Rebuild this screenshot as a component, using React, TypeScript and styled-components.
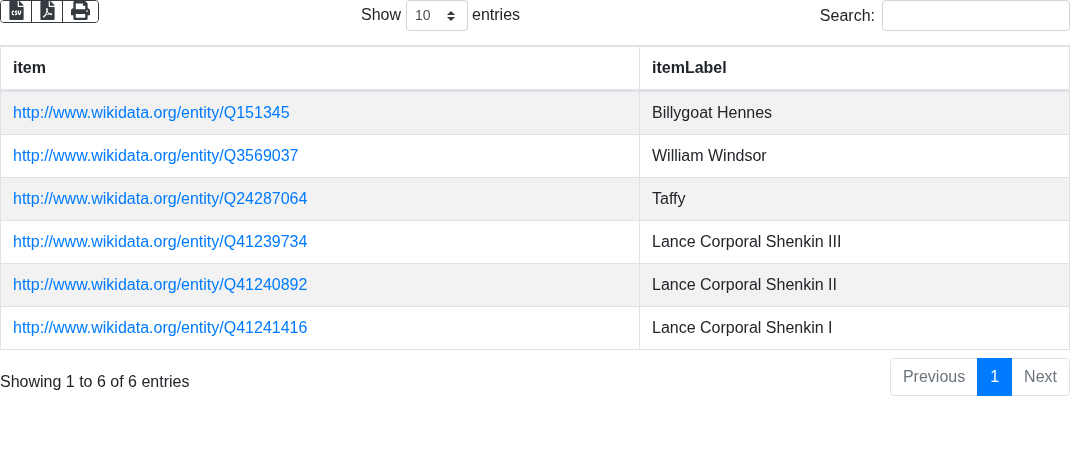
import React from "react";
import styled, { createGlobalStyle } from "styled-components";
import { FaFileCsv, FaFilePdf, FaPrint } from "react-icons/fa";

const Global = createGlobalStyle`
  html, body { margin: 0; padding: 0; background: #fff; }
  body { font-family: "Liberation Sans", Arial, sans-serif; font-size: 16px; line-height: 24px; color: #212529; }
`;

const Page = styled.div`
  width: 1070px;
  will-change: transform;
`;

const TopBar = styled.div`
  display: grid;
  grid-template-columns: 361px 1fr auto;
  height: 45px;
  align-items: start;
`;

const ButtonGroup = styled.div`
  display: inline-flex;
  justify-self: start;
  height: 23px;
  box-sizing: border-box;
  border: 1px solid #343a40;
  border-radius: 4px;
  overflow: hidden;
`;

const IconButton = styled.button<{ $width: number }>`
  display: flex;
  align-items: flex-start;
  justify-content: center;
  box-sizing: border-box;
  width: ${(p) => p.$width}px;
  padding: 0;
  margin: 0;
  border: 0;
  background: #fff;
  color: #343a40;
  font-size: 19px;
  & + & { border-left: 1px solid #343a40; }
  svg { display: block; }
`;

const LengthLabel = styled.label`
  display: flex;
  align-items: flex-start;
  gap: 4px;
  padding-top: 3px;
`;

const FakeSelect = styled.div`
  position: relative;
  box-sizing: border-box;
  width: 62px;
  height: 31px;
  margin: -3px 0 0 1px;
  border: 1px solid #ced4da;
  border-radius: 4px;
  padding: 3px 8px;
  font-size: 14px;
  line-height: 23px;
  color: #495057;
`;

const Caret = styled.svg`
  position: absolute;
  right: 12px;
  top: 10px;
`;

const SearchLabel = styled.label`
  display: flex;
  align-items: center;
  gap: 7px;
  height: 31px;
`;

const SearchInput = styled.input`
  box-sizing: border-box;
  width: 188px;
  height: 31px;
  border: 1px solid #ced4da;
  border-radius: 4px;
  padding: 0 8px;
  outline: none;
`;

const Table = styled.table`
  width: 1070px;
  table-layout: fixed;
  border-collapse: separate;
  border-spacing: 0;
  border: 1px solid #dee2e6;
  color: #212529;
  font-size: 16px;
  line-height: 24px;
`;

const HeadCell = styled.th`
  box-sizing: border-box;
  height: 45px;
  padding: 0 12px;
  text-align: left;
  font-weight: 700;
  border-top: 1px solid #dee2e6;
  border-right: 1px solid #dee2e6;
  border-bottom: 2px solid #dee2e6;
  &:last-child { border-right: 0; }
`;

const Row = styled.tr<{ $striped: boolean }>`
  background: ${(p) => (p.$striped ? "#f2f2f2" : "#fff")};
`;

const Cell = styled.td`
  box-sizing: border-box;
  height: 43px;
  padding: 0 12px;
  border-top: 1px solid #dee2e6;
  border-right: 1px solid #dee2e6;
  &:last-child { border-right: 0; }
`;

const ItemLink = styled.a`
  color: #007bff;
  text-decoration: none;
`;

const BottomBar = styled.div`
  display: flex;
  justify-content: space-between;
  align-items: flex-start;
  padding-top: 8px;
`;

const Info = styled.div`
  padding-top: 12px;
`;

const Pagination = styled.div`
  display: flex;
  height: 38px;
`;

const PageButton = styled.a<{ $active?: boolean; $pos?: "first" | "last" }>`
  box-sizing: border-box;
  height: 38px;
  padding: 6px 12px;
  line-height: 24px;
  border: 1px solid ${(p) => (p.$active ? "#007bff" : "#dee2e6")};
  background: ${(p) => (p.$active ? "#007bff" : "#fff")};
  color: ${(p) => (p.$active ? "#fff" : "#6c757d")};
  margin-left: ${(p) => (p.$pos === "first" ? 0 : "-1px")};
  position: relative;
  z-index: ${(p) => (p.$active ? 1 : 0)};
  border-radius: ${(p) =>
    p.$pos === "first" ? "4px 0 0 4px" : p.$pos === "last" ? "0 4px 4px 0" : "0"};
`;

const rows = [
  ["Q151345", "Billygoat Hennes"],
  ["Q3569037", "William Windsor"],
  ["Q24287064", "Taffy"],
  ["Q41239734", "Lance Corporal Shenkin III"],
  ["Q41240892", "Lance Corporal Shenkin II"],
  ["Q41241416", "Lance Corporal Shenkin I"],
];

export default function App() {
  return (
    <Page>
      <Global />
      <TopBar>
        <ButtonGroup>
          <IconButton $width={30}><FaFileCsv /></IconButton>
          <IconButton $width={31}><FaFilePdf /></IconButton>
          <IconButton $width={36}><FaPrint /></IconButton>
        </ButtonGroup>
        <LengthLabel>
          Show
          <FakeSelect>
            10
            <Caret width="8" height="10" viewBox="0 0 8 10">
              <path d="M4 0 L8 4 H0 Z M0 6 H8 L4 10 Z" fill="#343a40" />
            </Caret>
          </FakeSelect>
          entries
        </LengthLabel>
        <SearchLabel>
          Search:
          <SearchInput type="search" />
        </SearchLabel>
      </TopBar>
      <Table>
        <colgroup>
          <col style={{ width: 639 }} />
          <col />
        </colgroup>
        <thead>
          <tr>
            <HeadCell>item</HeadCell>
            <HeadCell>itemLabel</HeadCell>
          </tr>
        </thead>
        <tbody>
          {rows.map(([id, label], i) => (
            <Row key={id} $striped={i % 2 === 0}>
              <Cell>
                <ItemLink href="#">http://www.wikidata.org/entity/{id}</ItemLink>
              </Cell>
              <Cell>{label}</Cell>
            </Row>
          ))}
        </tbody>
      </Table>
      <BottomBar>
        <Info>Showing 1 to 6 of 6 entries</Info>
        <Pagination>
          <PageButton $pos="first">Previous</PageButton>
          <PageButton $active>1</PageButton>
          <PageButton $pos="last">Next</PageButton>
        </Pagination>
      </BottomBar>
    </Page>
  );
}
